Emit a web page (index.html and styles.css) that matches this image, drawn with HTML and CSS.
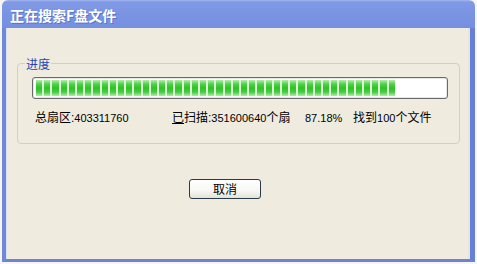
FILE: index.html
```html
<!DOCTYPE html>
<html>
<head>
<meta charset="utf-8">
<link rel="stylesheet" href="styles.css">
</head>
<body>
<div class="screen">
  <div class="window">
    <div class="titlebar">正在搜索F盘文件</div>
    <div class="frame">
      <fieldset class="group">
        <legend class="group-label">进度</legend>
        <div class="progress">
          <div class="progress-fill" style="width: 359px"></div>
        </div>
        <div class="stats">
          <span>总扇区:<span class="n">403311760</span></span>
          <span><u>已</u>扫描:<span class="n">351600640</span>个扇</span>
          <span class="n">87.18%</span>
          <span>找到<span class="n">100</span>个文件</span>
        </div>
      </fieldset>
      <button class="btn">取消</button>
    </div>
  </div>
</div>
</body>
</html>
```

FILE: styles.css
```css
html, body {
  margin: 0;
  padding: 0;
}
body {
  width: 477px;
  height: 264px;
  overflow: hidden;
  background: #f6f6f6;
  font-family: "Liberation Sans", "Noto Sans CJK SC", sans-serif;
}
.screen {
  display: flex;
  height: 264px;
}
.window {
  margin-left: 2px;
  width: 473px;
  height: 262px;
  display: flex;
  flex-direction: column;
}
.titlebar {
  height: 28px;
  box-sizing: border-box;
  padding: 6px 0 0 8px;
  background: linear-gradient(to bottom, #a4b6f0 0, #809ae6 2px, #7a94e2 50%, #7590df 100%);
  color: #ffffff;
  font-family: "Noto Sans CJK SC", sans-serif;
  font-weight: bold;
  font-size: 14px;
  line-height: 18px;
  text-shadow: 1px 1px 0 #5a72c8;
  border-radius: 6px 6px 0 0;
}
.frame {
  flex: 1;
  background: #efebdf;
  border-left: 4px solid #7088d8;
  border-right: 5px solid #6580d6;
  border-bottom: 3px solid #6c84d2;
  box-shadow: inset 1px 0 0 #dbe0f2, inset -2px 0 0 #e8e6dc;
  display: flex;
  flex-direction: column;
  align-items: flex-start;
}
.group {
  margin: 29px 0 0 11px;
  padding: 0 0 18px 14px;
  width: 443px;
  box-sizing: border-box;
  border: 1px solid #d3d0c0;
  border-radius: 4px;
  min-width: 0;
}
.group-label {
  margin-left: -7px;
  padding: 0 1px;
  font-family: "Noto Sans CJK SC", sans-serif;
  font-size: 12px;
  line-height: 13px;
  color: #1e47b4;
}
.progress {
  margin-top: 7px;
  width: 416px;
  height: 22px;
  box-sizing: border-box;
  border: 1px solid #6b6b6b;
  border-radius: 3px;
  background: #ffffff;
  padding: 2px 3px;
  box-shadow: inset 0 0 0 1px #e6e6e6;
}
.progress-fill {
  height: 100%;
  background:
    repeating-linear-gradient(90deg, transparent 0, transparent 6.2px, #dcf4d6 6.2px, #dcf4d6 8.2px),
    linear-gradient(to bottom, #b6eeae 0%, #52d04c 25%, #2ec22a 50%, #46cc40 75%, #b2eca8 100%);
}
.stats {
  margin-top: 12px;
  padding-left: 3px;
  display: grid;
  grid-template-columns: 137px 133px 48px auto;
  font-size: 12px;
  line-height: 14px;
  color: #000;
  white-space: nowrap;
}
.stats .n {
  font-family: "Liberation Sans", sans-serif;
  font-size: 11px;
}
.btn {
  margin: 35px 0 0 183px;
  width: 72px;
  height: 20px;
  box-sizing: border-box;
  border: 1px solid #2b3a48;
  border-radius: 3px;
  background: linear-gradient(to bottom, #ffffff 0%, #f7f7f3 60%, #e4e2d8 100%);
  font-family: "Noto Sans CJK SC", sans-serif;
  font-size: 12px;
  line-height: 16px;
  padding: 0;
  color: #000;
}
```
